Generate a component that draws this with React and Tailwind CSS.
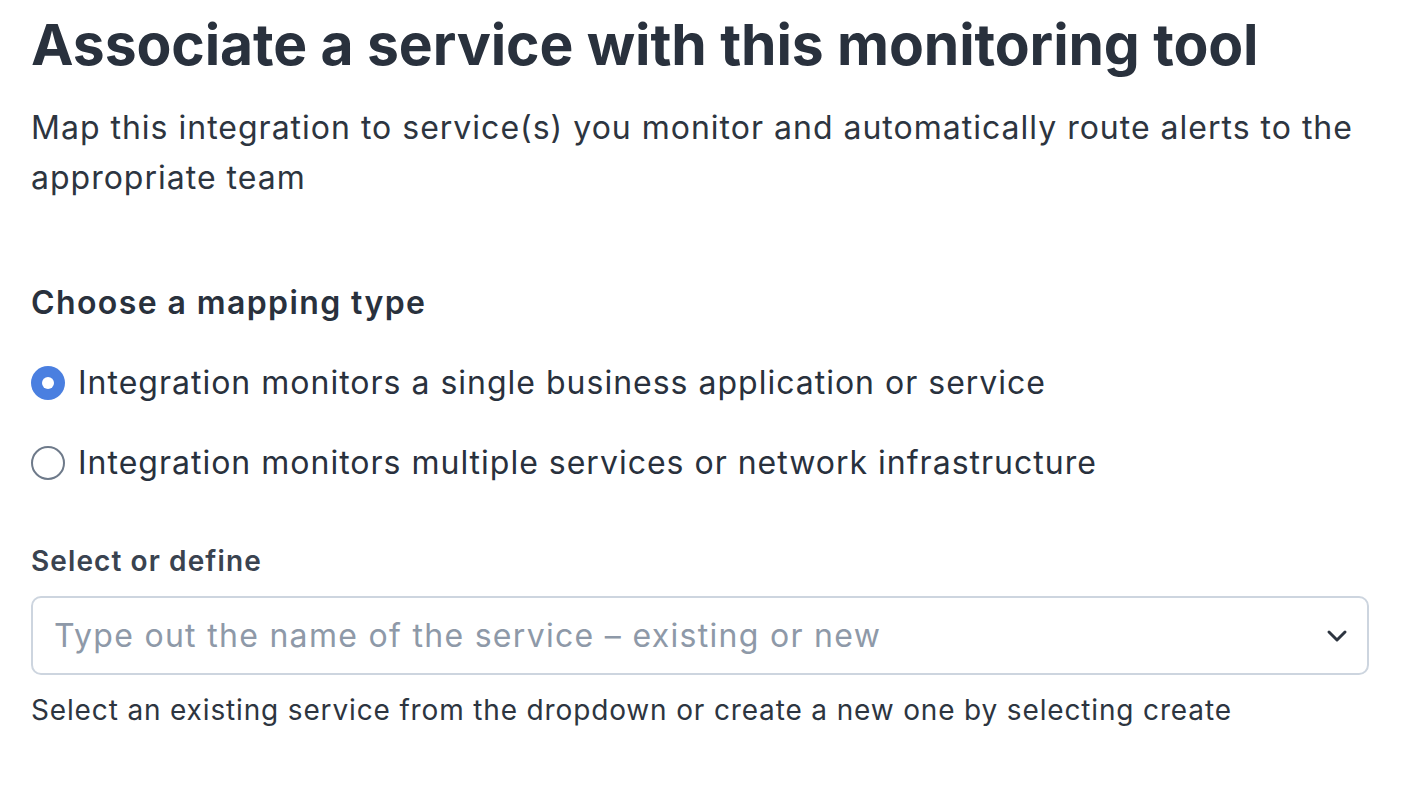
export default function App() {
  return (
    <div className="w-[1402px] h-[788px] bg-white overflow-hidden px-[31px] pt-[13px] text-[#29313d]" style={{ fontFamily: 'Inter, "Noto Sans", sans-serif' }}>
      <h1 className="text-[57px] font-bold leading-[64px] tracking-[-0.1px]">Associate a service with this monitoring tool</h1>
      <p className="mt-[26px] text-[32px] leading-[50px] tracking-[1px] text-[#2d3540]">
        Map this integration to service(s) you monitor and automatically route alerts to the appropriate team
      </p>
      <h2 className="mt-[77px] text-[32px] font-semibold leading-[46px] tracking-[1.4px]">Choose a mapping type</h2>
      <div className="mt-[34px] flex flex-col gap-[34px]">
        <label className="flex items-center gap-[13px] h-[46px]">
          <span className="w-[34px] h-[34px] rounded-full bg-[#4a7fe0] flex items-center justify-center shrink-0">
            <span className="w-[12px] h-[12px] rounded-full bg-white" />
          </span>
          <span className="text-[32px] leading-[46px] tracking-[1px]">Integration monitors a single business application or service</span>
        </label>
        <label className="flex items-center gap-[13px] h-[46px]">
          <span className="w-[34px] h-[34px] rounded-full border-2 border-[#6e7a8a] bg-white shrink-0" />
          <span className="text-[32px] leading-[46px] tracking-[1px]">Integration monitors multiple services or network infrastructure</span>
        </label>
      </div>
      <div className="mt-[55px] text-[28px] font-semibold leading-[40px] tracking-[1.1px] text-[#3a4350]">Select or define</div>
      <div className="mt-[15px] w-[1338px] h-[79px] rounded-[10px] border-2 border-[#cdd5df] flex items-center justify-between pl-[21px] pr-[19px]">
        <span className="text-[32px] tracking-[1.3px] text-[#8e99a8]">Type out the name of the service – existing or new</span>
        <svg width="22" height="14" viewBox="0 0 22 14" fill="none">
          <path d="M3 3l8 8 8-8" stroke="#2d3540" strokeWidth="3" strokeLinecap="round" strokeLinejoin="round" />
        </svg>
      </div>
      <div className="mt-[15px] text-[28px] leading-[40px] tracking-[0.85px] text-[#2d3540]">Select an existing service from the dropdown or create a new one by selecting create</div>
    </div>
  );
}
